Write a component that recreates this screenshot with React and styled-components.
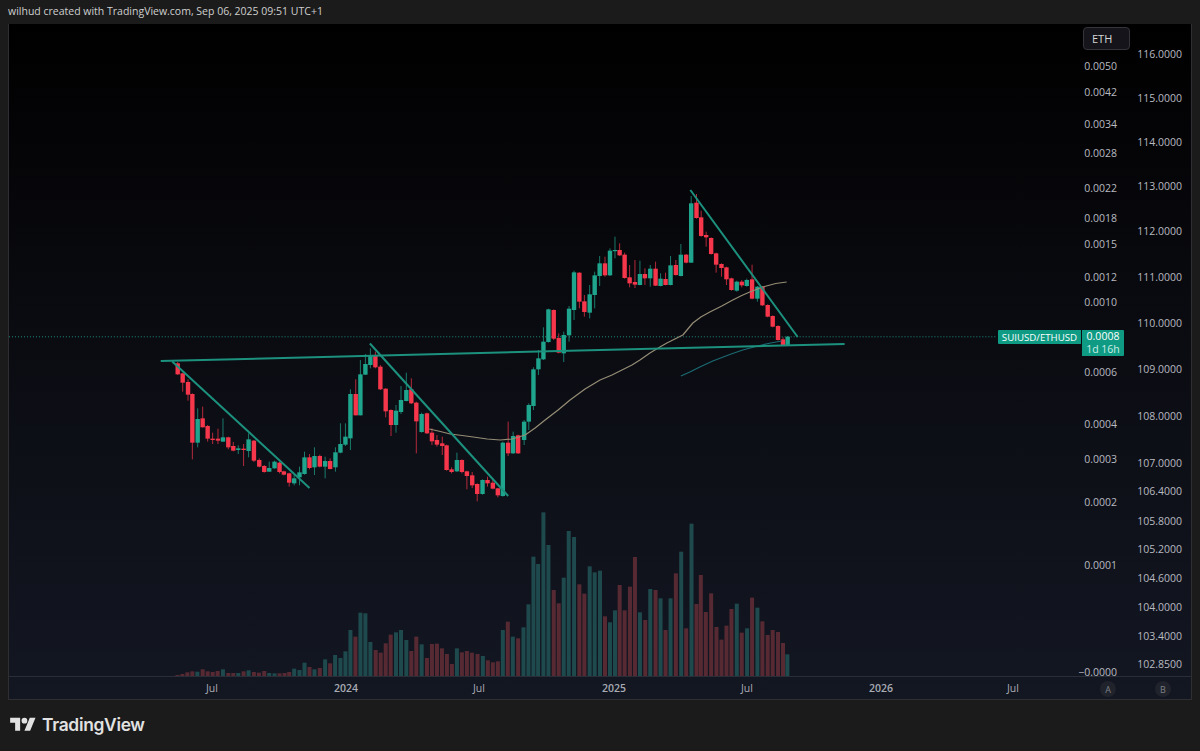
import React from 'react';
import styled, { createGlobalStyle } from 'styled-components';

const GREEN = '#1fa58d';
const RED = '#f5364b';
const VOL_GREEN = '#1e4a4e';
const VOL_RED = '#572a33';

// candles transcribed per chart segment: [x, bodyTop, bodyBottom, wickTop, wickBottom, up?]
const segments = [
  { ox: 150, oy: 340, items: [
    [81,70,103,66,105,0],[96,100,128,98,155,0],[112,126,164,118,182,0],[125,162,308,160,358,0],[141,237,308,205,322,1],
    [156,235,262,200,262,0],[171,258,296,255,305,0],[186,296,300,278,312,0],[202,296,302,266,312,0],[217,292,305,235,305,1],
    [233,292,322,290,328,0],[248,318,332,306,334,0],[263,325,330,316,342,1],[279,326,330,312,378,0],[294,298,333,280,352,1],
    [310,302,362,300,366,0],[326,360,380,355,382,0],[341,378,396,375,398,0],[356,384,395,365,396,1],[372,365,385,362,386,1],
    [387,368,396,365,400,0],[400,394,404,392,406,0],[416,400,428,398,440,0],[431,415,430,405,436,1],[447,397,412,380,436,1],
    [462,352,402,335,404,1],[477,352,384,342,388,0],[492,348,382,322,405,1],[508,348,380,344,382,0],[524,363,380,350,415,1],[539,363,387,355,388,0],
  ]},
  { ox: 330, oy: 340, items: [
    [15,337,382,322,395,1],[30,312,338,250,340,1],[45,290,314,250,318,1],[60,162,295,148,330,1],[76,162,226,118,226,0],
    [90,103,226,60,226,1],[105,72,104,42,105,1],[120,48,75,25,85,1],[135,48,82,35,85,0],[150,80,148,75,150,0],
    [166,146,214,145,232,0],[182,210,255,208,288,0],[197,212,255,195,278,1],[212,180,216,138,222,1],[228,150,183,98,184,1],
    [243,148,190,115,192,0],[258,188,244,185,340,0],[274,222,276,218,278,1],[290,220,280,218,282,0],[305,278,304,265,315,0],
    [320,300,314,285,320,0],[336,310,318,290,345,0],[349,316,390,314,392,0],[364,388,396,382,400,0],[380,360,394,338,396,1],
    [395,360,396,358,400,0],[410,394,408,392,448,0],[426,406,436,396,444,0],[441,432,462,430,484,0],[457,420,462,418,464,1],
    [472,420,430,410,440,0],[488,428,446,415,448,0],[503,445,466,444,472,0],[518,308,468,305,470,1],[534,308,340,245,348,0],
    [549,288,340,275,342,1],[564,286,340,284,342,0],
  ]},
  { ox: 505, oy: 340, items: [[57,245,300,240,315,1],[71,195,245,190,270,1],[85,88,198,82,210,1],[100,55,88,30,105,1]] },
  { ox: 500, oy: 230, items: [
    [130,335,388,292,390,1],[145,238,336,236,338,1],[161,240,326,238,330,0],[176,324,368,310,370,0],[191,315,370,305,396,1],
    [207,236,316,228,335,1],[222,127,240,122,270,1],[238,128,215,127,235,0],[253,214,246,195,260,0],[269,193,248,165,265,1],
    [284,136,195,125,235,1],[299,100,138,78,168,1],[315,100,136,80,140,0],[330,62,136,55,138,1],[345,60,63,20,85,1],
    [359,60,76,40,78,0],[374,74,144,68,146,0],[389,142,160,105,172,0],[405,156,164,90,174,0],[420,132,165,92,166,1],
    [435,132,145,115,165,0],[451,116,145,105,170,1],[467,116,167,95,168,0],
  ]},
  { ox: 650, oy: 180, items: [
    [32,296,318,280,319,1],[47,297,315,278,316,0],[62,256,315,228,316,1],[78,255,285,240,287,0],[93,224,288,192,289,1],
    [109,224,248,222,250,0],[124,70,248,48,249,1],[140,68,114,42,116,0],[154,112,168,92,170,0],[169,165,172,155,200,0],
    [184,174,222,172,224,0],[199,220,254,218,278,0],[215,252,264,250,290,0],[230,262,298,260,315,0],[245,295,330,293,332,0],
    [261,305,332,302,335,1],[276,305,316,300,322,0],[291,300,318,296,320,1],[307,298,356,254,358,0],[323,320,356,318,365,1],
    [338,320,376,318,378,0],[354,375,410,373,412,0],[369,408,440,406,442,0],[385,438,480,436,482,0],[400,478,495,472,495,0],
    [414,470,495,468,495,1],
  ]},
];

const candles = segments.flatMap(({ ox, oy, items }) =>
  items.map(([x, t, b, wt, wb, up]) => ({
    x: ox + x / 3, top: oy + t / 3, bottom: oy + b / 3, wickTop: oy + wt / 3, wickBottom: oy + wb / 3, up: !!up,
  })));

const volumeSets = [
  { ox: 150, oy: 590, items: [
    [80,255,0],[95,252,0],[110,247,0],[125,244,0],[140,245,1],[156,238,0],[171,244,0],[186,246,0],[201,243,0],[217,238,1],
    [233,249,0],[248,249,0],[263,249,1],[279,244,0],[294,241,1],[310,246,0],[325,248,0],[341,243,0],[356,249,1],[372,250,1],
    [387,250,0],[402,249,0],[416,246,0],[431,236,1],[447,240,1],[462,218,1],[477,231,0],[492,238,1],[508,234,0],[524,208,1],
    [539,220,0],[554,195,1],[570,204,1],[585,184,1],[600,120,1],[615,140,0],[630,68,1],[645,70,1],[660,156,1],[676,180,0],
    [691,188,0],[706,160,0],[721,134,0],[737,127,1],[752,120,1],[768,150,1],[783,183,0],[798,140,0],[814,163,1],[830,204,0],
    [845,162,0],[860,161,0],[875,175,0],[890,192,0],[905,222,0],[920,175,1],[935,187,0],[950,183,0],[965,188,0],[982,192,0],
    [998,198,1],[1013,211,0],[1028,217,0],[1043,214,0],
  ]},
  { ox: 500, oy: 505, items: [
    [8,375,1],[23,350,0],[38,395,1],[54,400,0],[70,367,1],[85,298,1],[100,155,1],[114,177,1],[130,22,1],[145,120,1],
    [161,255,0],[176,295,0],[191,218,1],[206,78,1],[222,96,1],[238,238,0],[253,266,0],[269,184,1],[284,202,1],[300,197,1],
    [315,334,0],[330,352,1],[345,316,1],[359,240,0],[374,316,0],[390,245,0],[405,156,0],[420,322,1],[436,345,0],[451,252,1],
    [467,255,0],[482,280,1],[497,375,0],[512,280,1],[528,205,0],[544,140,1],[559,370,0],[575,56,1],[590,297,0],[603,210,0],
    [618,321,0],[634,265,0],[650,366,0],[665,404,0],[680,362,0],[695,312,0],[711,296,1],[726,383,0],[742,370,1],[757,278,0],
    [773,308,1],[788,349,0],[804,390,0],[819,375,0],[835,381,0],[850,414,0],[863,448,1],
  ]},
];
const VOLUME_BASE = 676.5;
const volumes = volumeSets.flatMap(({ ox, oy, items }) =>
  items.map(([x, t, up]) => ({ x: ox + x / 3, top: oy + t / 3, up: !!up })));

const trendLines = [
  [160, 361, 845, 344],
  [171.5, 361.5, 309, 488],
  [369.5, 343.5, 508, 496],
  [690.5, 190, 798, 337],
];
const slowAverage = '429,429 438,431 450,434 462,435.5 473,437 487,439 500,440 512,439 525,435 535,428 545,420 558,410 570,400 585,389 600,380 612,375 622,370 632,365 640,360 650,353 660,347 667,343 675,339 683,335 688,329 693,323 701,317 710,312 722,306 733,300 742,295.5 750,292 763,287 776,283.5 787,282';
const fastAverage = '681,376 690,372 700,367 713,361 730,354.5 743,350 760,345.5 771,343 782,341';

const leftTicks = [
  ['0.0050', 66], ['0.0042', 92], ['0.0034', 124], ['0.0028', 153], ['0.0022', 188], ['0.0018', 218], ['0.0015', 244],
  ['0.0012', 277], ['0.0010', 302], ['0.0006', 372], ['0.0004', 424], ['0.0003', 459], ['0.0002', 502], ['0.0001', 565], ['−0.0000', 672],
];
const rightTicks = [
  ['116.0000', 54], ['115.0000', 98], ['114.0000', 142], ['113.0000', 186], ['112.0000', 231], ['111.0000', 277], ['110.0000', 323],
  ['109.0000', 369], ['108.0000', 416], ['107.0000', 463], ['106.4000', 491], ['105.8000', 521], ['105.2000', 549], ['104.6000', 578],
  ['104.0000', 607], ['103.4000', 636], ['102.8500', 664],
];
const timeTicks = [['Jul', 211, 0], ['2024', 345, 1], ['Jul', 478, 0], ['2025', 613, 1], ['Jul', 746, 0], ['2026', 880, 1], ['Jul', 1012, 0]];

const FRAME_LEFT = 8;
const FRAME_TOP = 24;
const FONT = `"Open Sans", "Noto Sans", "DejaVu Sans", sans-serif`;

const Global = createGlobalStyle`
  html, body { margin: 0; padding: 0; background: #1b1b1b; }
  * { box-sizing: border-box; }
`;

const Page = styled.div`
  width: 1200px;
  height: 751px;
  display: flex;
  flex-direction: column;
  background: #1b1b1b;
  font-family: ${FONT};
  overflow: hidden;
`;

const Caption = styled.header`
  height: 24px;
  flex: none;
  padding: 0 0 2px 8px;
  display: flex;
  align-items: center;
  font-size: 10.5px;
  color: #cfcfcf;
`;

const Frame = styled.main`
  position: relative;
  flex: none;
  height: 676px;
  margin: 0 8px;
  border: 1px solid #2e2e33;
  border-width: 0 1px 1px 1px;
  background: linear-gradient(180deg, #000000 0%, #0b0c12 48%, #131722 100%);
  overflow: hidden;
`;

const ChartCanvas = styled.svg`
  position: absolute;
  inset: 0;
  width: 100%;
  height: 100%;
  display: block;
`;

const Tick = styled.span.attrs((p) => ({ style: { top: p.$y - FRAME_TOP } }))`
  position: absolute;
  right: ${(p) => p.$right}px;
  transform: translateY(-50%);
  font-size: 10.5px;
  line-height: 12px;
  color: #b8bac0;
  white-space: nowrap;
`;

const SymbolButton = styled.div`
  position: absolute;
  top: 3px;
  right: 61px;
  width: 47px;
  height: 23px;
  padding-left: 8px;
  display: flex;
  align-items: center;
  font-size: 11px;
  color: #d6d6d6;
  background: #14141a;
  border: 1px solid #34343a;
  border-radius: 4px;
`;

const PriceMarker = styled.div`
  position: absolute;
  top: 306px;
  left: 989px;
  display: flex;
  align-items: flex-start;
  color: #ffffff;
  font-size: 10.5px;
  line-height: 13px;
`;

const PairTag = styled.div`
  width: 83px;
  height: 14px;
  display: flex;
  align-items: center;
  justify-content: center;
  background: #0f9a83;
  border-radius: 1px 0 0 1px;
  font-size: 9.7px;
  white-space: nowrap;
`;

const ValueTag = styled.div`
  width: 42px;
  height: 26px;
  margin-left: 1px;
  display: flex;
  flex-direction: column;
  align-items: center;
  background: #0f9a83;
  border-radius: 0 1px 1px 0;
`;

const Countdown = styled.span`
  color: #cdeee8;
`;

const TimeAxis = styled.div`
  position: absolute;
  left: 0;
  right: 0;
  bottom: 0;
  height: 23px;
  border-top: 1px solid #2a2e39;
`;

const TimeLabel = styled.span.attrs((p) => ({ style: { left: p.$x - FRAME_LEFT } }))`
  position: absolute;
  top: 4px;
  transform: translateX(-50%);
  font-size: 10.5px;
  line-height: 14px;
  color: #a9acb4;
  font-weight: ${(p) => (p.$strong ? 600 : 400)};
`;

const ScaleBadge = styled.span.attrs((p) => ({ style: { left: p.$x - FRAME_LEFT } }))`
  position: absolute;
  top: 4px;
  width: 16px;
  height: 16px;
  transform: translateX(-50%);
  display: flex;
  align-items: center;
  justify-content: center;
  border-radius: 50%;
  background: #20232b;
  color: #7d8088;
  font-size: 9px;
`;

const Footer = styled.footer`
  flex: 1;
  display: flex;
  align-items: center;
  gap: 6px;
  padding: 0 0 2px 10px;
`;

const Brand = styled.span`
  font-family: Inter, Roboto, sans-serif;
  font-size: 17.4px;
  font-weight: 600;
  letter-spacing: -0.3px;
  color: #e2e2e2;
`;

const TradingViewMark = () => (
  <svg width="26" height="20" viewBox="0 0 36 28" aria-hidden="true">
    <path fill="#e2e2e2" d="M14 22H7V11H0V4h14v18zM28 22h-8l7.5-18h8L28 22z" />
    <circle fill="#e2e2e2" cx="20" cy="8" r="4" />
  </svg>
);

const Chart = () => (
  <ChartCanvas viewBox={`${FRAME_LEFT} ${FRAME_TOP} 1184 675`} preserveAspectRatio="none">
    <line x1="8" x2="998" y1="336.8" y2="336.8" stroke="#1d8f7e" strokeWidth="1" strokeDasharray="1 2" />
    {volumes.map((v, i) => (
      <rect key={i} x={v.x - 2} y={v.top} width="4" height={Math.max(VOLUME_BASE - v.top, 0)} fill={v.up ? VOL_GREEN : VOL_RED} />
    ))}
    {candles.map((c, i) => {
      const color = c.up ? GREEN : RED;
      return (
        <g key={i}>
          <line x1={c.x} x2={c.x} y1={c.wickTop} y2={c.wickBottom} stroke={color} strokeWidth="0.9" opacity="0.8" />
          <rect x={c.x - 2.2} y={c.top} width="4.4" height={Math.max(c.bottom - c.top, 1.2)} fill={color} />
        </g>
      );
    })}
    <polyline points={slowAverage} fill="none" stroke="#958d75" strokeWidth="1.2" strokeLinejoin="round" />
    <polyline points={fastAverage} fill="none" stroke="#1b6a72" strokeWidth="1.2" strokeLinejoin="round" />
    {trendLines.map(([x1, y1, x2, y2], i) => (
      <line key={i} x1={x1} y1={y1} x2={x2} y2={y2} stroke="#1c917e" strokeWidth="2" />
    ))}
  </ChartCanvas>
);

export default function App() {
  return (
    <Page>
      <Global />
      <Caption>wilhud created with TradingView.com, Sep 06, 2025 09:51 UTC+1</Caption>
      <Frame>
        <Chart />
        <SymbolButton>ETH</SymbolButton>
        {leftTicks.map(([label, y]) => <Tick key={label} $y={y} $right={74}>{label}</Tick>)}
        {rightTicks.map(([label, y]) => <Tick key={label} $y={y} $right={9}>{label}</Tick>)}
        <PriceMarker>
          <PairTag>SUIUSD/ETHUSD</PairTag>
          <ValueTag>
            <span>0.0008</span>
            <Countdown>1d 16h</Countdown>
          </ValueTag>
        </PriceMarker>
        <TimeAxis>
          {timeTicks.map(([label, x, strong], i) => <TimeLabel key={i} $x={x} $strong={!!strong}>{label}</TimeLabel>)}
          <ScaleBadge $x={1107}>A</ScaleBadge>
          <ScaleBadge $x={1162}>B</ScaleBadge>
        </TimeAxis>
      </Frame>
      <Footer>
        <TradingViewMark />
        <Brand>TradingView</Brand>
      </Footer>
    </Page>
  );
}
